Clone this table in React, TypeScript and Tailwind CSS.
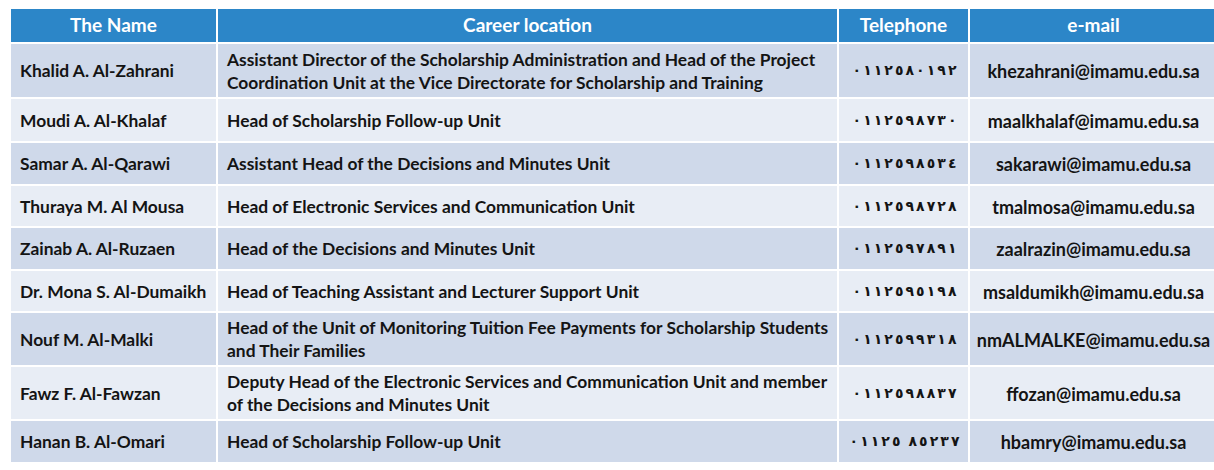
type Person = {
  name: string;
  career: string[];
  phone: string;
  email: string;
  h: string;
};

const people: Person[] = [
  {
    name: 'Khalid A. Al-Zahrani',
    career: [
      'Assistant Director of the Scholarship Administration and Head of the Project',
      'Coordination Unit at the Vice Directorate for Scholarship and Training',
    ],
    phone: '٠١١٢٥٨٠١٩٢',
    email: 'khezahrani@imamu.edu.sa',
    h: 'h-[55px]',
  },
  {
    name: 'Moudi A. Al-Khalaf',
    career: ['Head of Scholarship Follow-up Unit'],
    phone: '٠١١٢٥٩٨٧٣٠',
    email: 'maalkhalaf@imamu.edu.sa',
    h: 'h-[44px]',
  },
  {
    name: 'Samar A. Al-Qarawi',
    career: ['Assistant Head of the Decisions and Minutes Unit'],
    phone: '٠١١٢٥٩٨٥٣٤',
    email: 'sakarawi@imamu.edu.sa',
    h: 'h-[43px]',
  },
  {
    name: 'Thuraya M. Al Mousa',
    career: ['Head of Electronic Services and Communication Unit'],
    phone: '٠١١٢٥٩٨٧٢٨',
    email: 'tmalmosa@imamu.edu.sa',
    h: 'h-[42px]',
  },
  {
    name: 'Zainab A. Al-Ruzaen',
    career: ['Head of the Decisions and Minutes Unit'],
    phone: '٠١١٢٥٩٧٨٩١',
    email: 'zaalrazin@imamu.edu.sa',
    h: 'h-[43px]',
  },
  {
    name: 'Dr. Mona S. Al-Dumaikh',
    career: ['Head of Teaching Assistant and Lecturer Support Unit'],
    phone: '٠١١٢٥٩٥١٩٨',
    email: 'msaldumikh@imamu.edu.sa',
    h: 'h-[42px]',
  },
  {
    name: 'Nouf M. Al-Malki',
    career: [
      'Head of the Unit of Monitoring Tuition Fee Payments for Scholarship Students',
      'and Their Families',
    ],
    phone: '٠١١٢٥٩٩٣١٨',
    email: 'nmALMALKE@imamu.edu.sa',
    h: 'h-[54px]',
  },
  {
    name: 'Fawz F. Al-Fawzan',
    career: [
      'Deputy Head of the Electronic Services and Communication Unit and member',
      'of the Decisions and Minutes Unit',
    ],
    phone: '٠١١٢٥٩٨٨٣٧',
    email: 'ffozan@imamu.edu.sa',
    h: 'h-[54px]',
  },
  {
    name: 'Hanan B. Al-Omari',
    career: ['Head of Scholarship Follow-up Unit'],
    phone: '٠١١٢٥ ٨٥٢٣٧',
    email: 'hbamry@imamu.edu.sa',
    h: 'h-[43px]',
  },
];

// arabic digits, one box each so spacing + order stay as written
const Phone = ({ value }: { value: string }) => (
  <span className="inline-flex" dir="ltr">
    {value.split('').map((c, k) => (
      <span key={k} className={`inline-block text-center ${c === ' ' ? 'w-[6px]' : 'w-[10.6px]'}`}>
        {c}
      </span>
    ))}
  </span>
);

const App = () => {
  return (
    <div className="w-[1214px] h-[470px] overflow-hidden bg-white pt-[9px] pl-[11px] font-['Lato',sans-serif] font-bold">
      <table className="w-[1206px] border-collapse table-fixed text-[17.4px] text-[#141414]">
        <colgroup>
          <col className="w-[206px]" />
          <col className="w-[621px]" />
          <col className="w-[131px]" />
          <col className="w-[248px]" />
        </colgroup>
        <thead>
          <tr className="h-[34px] bg-[#2c86c8] text-white text-[19px]">
            {/* header */}
            <th className="border-2 border-t-0 border-l-0 border-white">The Name</th>
            <th className="border-2 border-t-0 border-white">Career location</th>
            <th className="border-2 border-t-0 border-white">Telephone</th>
            <th className="border-2 border-t-0 border-r-0 border-white">e-mail</th>
          </tr>
        </thead>
        <tbody>
          {people.map((p, i) => (
            <tr
              key={i}
              className={`${p.h} ${i % 2 === 0 ? 'bg-[#cfd9ea]' : 'bg-[#e8edf5]'}`}
            >
              <td className="border-2 border-l-0 border-white pl-[9px] pt-[2px] align-middle whitespace-nowrap">
                {p.name}
              </td>
              <td className="border-2 border-white pl-[9px] align-middle leading-[23px] whitespace-nowrap">
                {p.career.map((line, j) => (
                  <div key={j}>{line}</div>
                ))}
              </td>
              <td className="border-2 border-white text-center align-middle font-['DejaVu_Sans',sans-serif] text-[14px] pl-[2px]">
                <Phone value={p.phone} />
              </td>
              <td className="border-2 border-r-0 border-white text-center align-middle whitespace-nowrap text-[18px] pt-[2px]">
                {p.email}
              </td>
            </tr>
          ))}
        </tbody>
      </table>
    </div>
  );
};

export default App;
